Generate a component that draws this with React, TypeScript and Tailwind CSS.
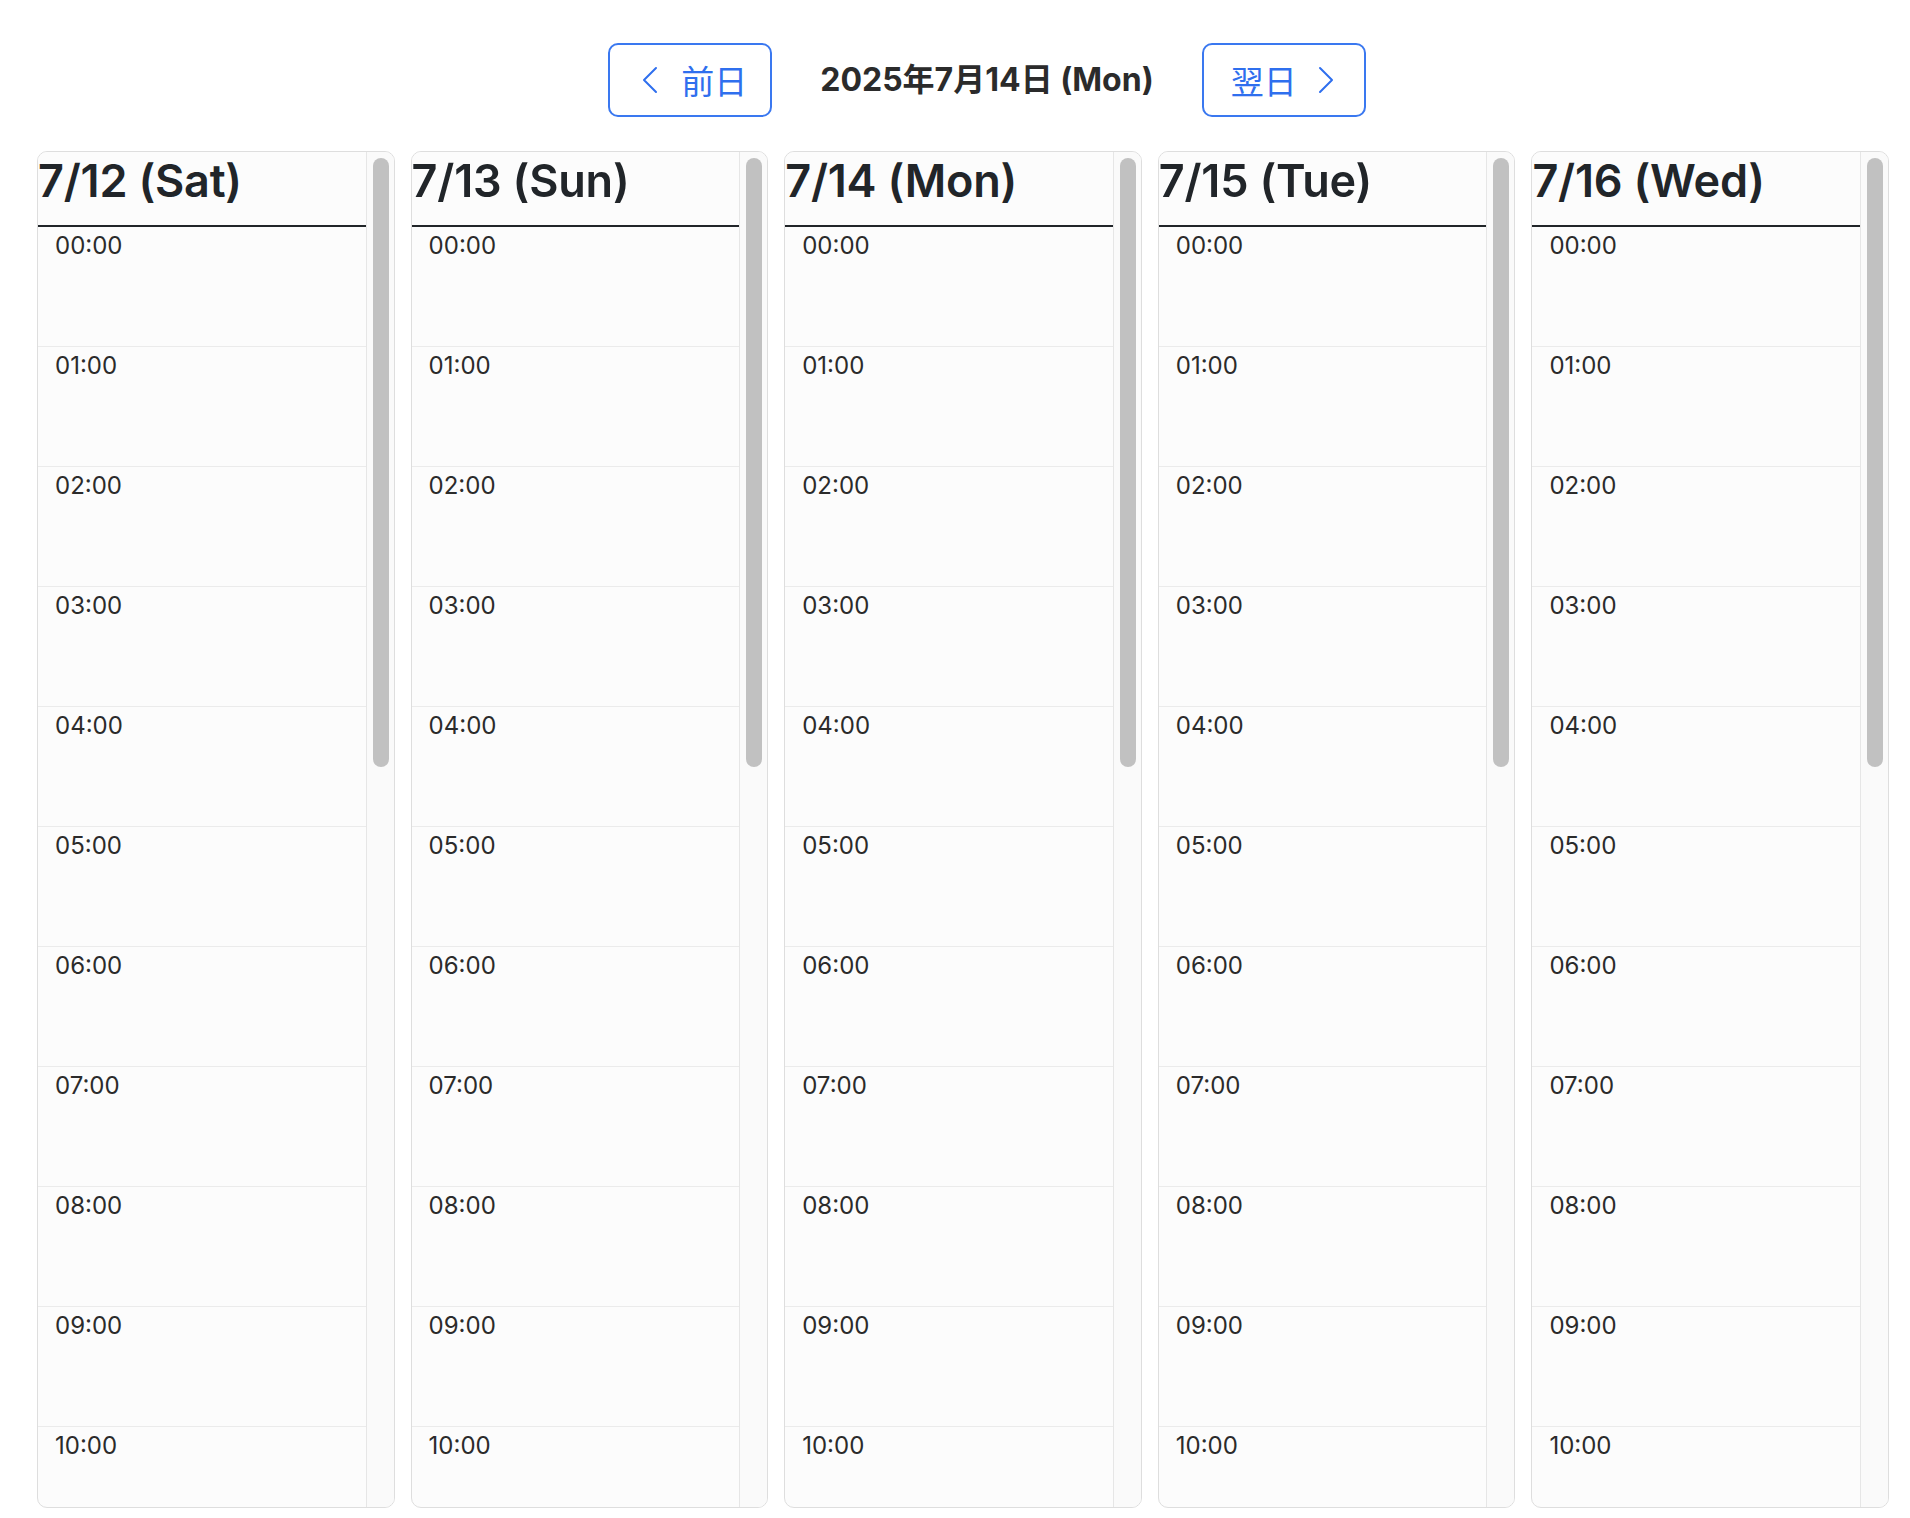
const days = [
    { label: "7/12 (Sat)" },
    { label: "7/13 (Sun)" },
    { label: "7/14 (Mon)" },
    { label: "7/15 (Tue)" },
    { label: "7/16 (Wed)" },
];

const hours = Array.from({ length: 24 }, (_, i) => `${String(i).padStart(2, "0")}:00`);

const ChevronLeft = () => (
    <svg width="16" height="28" viewBox="0 0 16 28" fill="none">
        <polyline points="14,2 2,14 14,26" stroke="currentColor" strokeWidth="2" strokeLinecap="round" strokeLinejoin="round" />
    </svg>
);

const ChevronRight = () => (
    <svg width="16" height="28" viewBox="0 0 16 28" fill="none">
        <polyline points="2,2 14,14 2,26" stroke="currentColor" strokeWidth="2" strokeLinecap="round" strokeLinejoin="round" />
    </svg>
);

const DayColumn = ({ label }: { label: string }) => {
    return (
        <div className="flex flex-1 min-w-0 h-full rounded-[10px] border border-[#dedede] bg-[#fcfcfc] overflow-hidden">
            {/* scrollable day content, native scrollbar hidden */}
            <div className="flex-1 min-w-0 h-full overflow-y-auto [scrollbar-width:none]">
                <div className="sticky top-0 h-[75px] border-b-2 border-[#212529] bg-[#fcfcfc] pt-[2px]">
                    <h1 className="text-[45px] leading-[1.2] font-semibold text-[#212529] whitespace-nowrap tracking-[-0.2px]">
                        {label}
                    </h1>
                </div>
                {hours.map((h) => (
                    <div key={h} className="h-[120px] border-b border-[#ebebeb] pl-[17px] pt-px">
                        <span className="text-[24px] leading-[1.5] text-[#2b2b2b]">{h}</span>
                    </div>
                ))}
            </div>
            {/* scrollbar track */}
            <div className="w-[28px] shrink-0 h-full border-l border-[#e6e6e6] bg-[#fafafa] pl-[6px] pr-[5px] pt-[6px]">
                <div className="h-[609px] w-full rounded-full bg-[#c1c1c1]" />
            </div>
        </div>
    );
};

const App = () => {
    return (
        <div
            className="w-full h-screen bg-white overflow-hidden"
            style={{ fontFamily: "Inter, 'Noto Sans CJK JP', sans-serif" }}
        >
            <div className="flex items-center justify-center gap-[48px] pt-[43px] pl-[64px]">
                <button className="flex items-center gap-[23px] w-[164px] h-[74px] pl-[32px] rounded-[10px] border-2 border-[#3a78f0] text-[#2f6fee] bg-white">
                    <ChevronLeft />
                    <span className="text-[33px] leading-none" style={{ fontFamily: "'Noto Sans CJK JP', sans-serif" }}>
                        前日
                    </span>
                </button>
                <div className="text-[32px] font-bold text-[#2b2b2b] leading-none">
                    2025年7月14日 (Mon)
                </div>
                <button className="flex items-center gap-[21px] w-[164px] h-[74px] pl-[27px] rounded-[10px] border-2 border-[#3a78f0] text-[#2f6fee] bg-white">
                    <span className="text-[33px] leading-none" style={{ fontFamily: "'Noto Sans CJK JP', sans-serif" }}>
                        翌日
                    </span>
                    <ChevronRight />
                </button>
            </div>

            <div className="flex gap-4 h-[1357px] mt-[34px] pl-[37px] pr-[21px]">
                {days.map((d) => (
                    <DayColumn key={d.label} label={d.label} />
                ))}
            </div>
        </div>
    );
};

export default App;
